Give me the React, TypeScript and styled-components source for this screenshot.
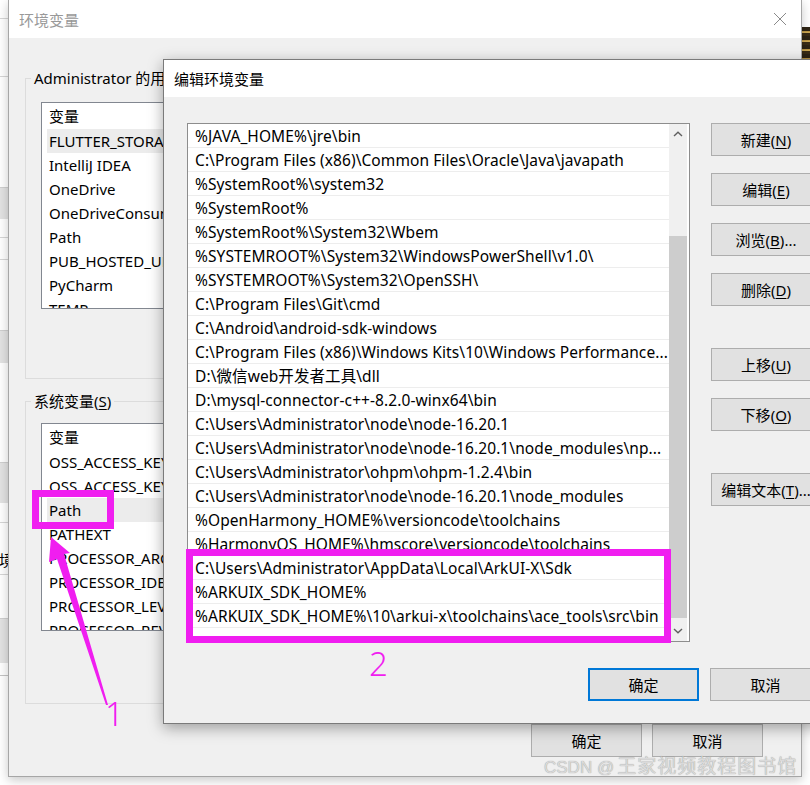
import React from "react";
import styled, { createGlobalStyle } from "styled-components";

const UI_FONT = `"Noto Sans", "Noto Sans CJK SC", sans-serif`;
const MAGENTA = "#f01ef0";

const GlobalStyle = createGlobalStyle`
  html, body { margin: 0; padding: 0; }
  body {
    width: 810px;
    height: 785px;
    overflow: hidden;
    background: #ffffff;
    font-family: ${UI_FONT};
  }
`;

const Desktop = styled.div`
  position: relative;
  width: 810px;
  height: 785px;
  overflow: hidden;
  background: #ffffff;
  font-family: ${UI_FONT};
  font-size: 15px;
  color: #000;
`;

/* ---------- background windows on the desktop ---------- */

const BackWindow = styled.div`
  position: absolute;
  left: 0;
  top: 0;
  width: 8px;
  height: 675px;
  overflow: hidden;
  display: flex;
  flex-direction: column;
  background: #ffffff;
  border-bottom: 1px solid #c4c4c4;
`;

const Band = styled.div<{ $h: number; $kind: "white" | "gray" | "line"; $padTop?: number }>`
  flex: none;
  height: ${(p) => p.$h}px;
  display: flex;
  align-items: flex-start;
  justify-content: flex-end;
  padding-top: ${(p) => p.$padTop ?? 0}px;
  background: ${(p) =>
    p.$kind === "gray" ? "#e3e3e3" : p.$kind === "line" ? "#d6d6d6" : "#ffffff"};
  border-top: ${(p) => (p.$kind === "gray" ? "1px solid #cfcfcf" : "none")};
  box-sizing: border-box;
  font-size: 15px;
  line-height: 20px;
  white-space: nowrap;
`;

const ClippedChar = styled.span`
  margin-right: -6px;
`;

const RightStrip = styled.div`
  position: absolute;
  left: 801px;
  top: 0;
  width: 9px;
  height: 785px;
  display: flex;
  flex-direction: column;
  background: #ffffff;
`;

const StripBlock = styled.div<{ $h: number; $bg: string }>`
  flex: none;
  height: ${(p) => p.$h}px;
  background: ${(p) => p.$bg};
`;

/* ---------- generic window parts ---------- */

const TitleBar = styled.div<{ $h: number; $pl: number; $pr: number }>`
  flex: none;
  height: ${(p) => p.$h}px;
  display: flex;
  align-items: center;
  justify-content: space-between;
  padding: 0 ${(p) => p.$pr}px 0 ${(p) => p.$pl}px;
  background: #ffffff;
`;

const TitleText = styled.span<{ $inactive?: boolean }>`
  font-size: 15px;
  color: ${(p) => (p.$inactive ? "#999999" : "#000000")};
`;

const WinButton = styled.button<{ $w: number; $default?: boolean }>`
  flex: none;
  width: ${(p) => p.$w}px;
  height: 33px;
  box-sizing: border-box;
  margin: 0;
  padding: 0 0 1px 0;
  background: #e1e1e1;
  border: ${(p) => (p.$default ? "2px solid #0078d7" : "1px solid #adadad")};
  font-family: ${UI_FONT};
  font-size: 15px;
  color: #000;
  white-space: nowrap;
  u {
    text-decoration-thickness: 1px;
    text-underline-offset: 2px;
  }
`;

/* ---------- main "环境变量" window ---------- */

const MainWindow = styled.section`
  position: absolute;
  left: 8px;
  top: 0;
  width: 794px;
  height: 777px;
  box-sizing: border-box;
  border: 1px solid #a6a6a6;
  border-top: none;
  background: #f0f0f0;
  display: flex;
  flex-direction: column;
  box-shadow: 0 3px 10px rgba(0, 0, 0, 0.22);
`;

const MainBody = styled.div`
  flex: 1;
  display: flex;
  flex-direction: column;
  padding: 30px 16px 0 16px;
`;

const GroupBox = styled.fieldset<{ $pt: number; $pb: number; $mt?: number }>`
  margin: ${(p) => p.$mt ?? 0}px 0 0 0;
  padding: ${(p) => p.$pt}px 15px ${(p) => p.$pb}px 15px;
  border: 1px solid #dcdcdc;
  min-width: 0;
`;

const Legend = styled.legend`
  margin-left: -10px;
  padding: 0 3px;
  font-size: 15px;
  line-height: 20px;
  color: #000;
  white-space: nowrap;
  u {
    text-underline-offset: 2px;
  }
`;

const VarList = styled.div<{ $h: number }>`
  height: ${(p) => p.$h}px;
  box-sizing: border-box;
  background: #ffffff;
  border: 1px solid #828790;
  overflow: hidden;
  display: flex;
  flex-direction: column;
`;

const VarHeader = styled.div`
  flex: none;
  height: 26px;
  line-height: 26px;
  padding-left: 7px;
  font-size: 15px;
`;

const VarRow = styled.div<{ $selected?: boolean }>`
  flex: none;
  height: 24px;
  line-height: 24px;
  margin-left: 5px;
  padding-left: 2px;
  font-size: 15px;
  white-space: nowrap;
  background: ${(p) => (p.$selected ? "#ececec" : "transparent")};
`;

const MainFooter = styled.div`
  display: flex;
  justify-content: flex-end;
  gap: 10px;
  margin-top: 20px;
  padding-right: 22px;
`;

/* ---------- "编辑环境变量" window ---------- */

const EditWindow = styled.section`
  position: absolute;
  left: 163px;
  top: 59px;
  width: 682px;
  height: 665px;
  box-sizing: border-box;
  border: 1px solid #7a7a7a;
  background: #f0f0f0;
  display: flex;
  flex-direction: column;
  box-shadow: 0 4px 14px rgba(0, 0, 0, 0.35);
`;

const EditBody = styled.div`
  display: grid;
  grid-template-columns: 503px 110px;
  column-gap: 21px;
  row-gap: 26px;
  align-items: start;
  padding: 26px 0 0 23px;
`;

const PathList = styled.div`
  width: 503px;
  height: 519px;
  box-sizing: border-box;
  background: #ffffff;
  border: 1px solid #8d8d8d;
  display: flex;
  overflow: hidden;
`;

const PathRows = styled.div`
  flex: 1;
  min-width: 0;
  display: flex;
  flex-direction: column;
`;

const PathRow = styled.div`
  flex: none;
  height: 24px;
  box-sizing: border-box;
  border-bottom: 1px solid #ededed;
  padding-left: 7px;
  line-height: 24px;
  font-size: 15.5px;
  letter-spacing: 0.08px;
  white-space: nowrap;
  overflow: hidden;
  text-overflow: clip;
`;

const ScrollBar = styled.div`
  flex: none;
  width: 18px;
  margin-right: 2px;
  display: flex;
  flex-direction: column;
  background: #f0f0f0;
`;

const ScrollArrow = styled.div`
  flex: none;
  height: 20px;
  display: flex;
  align-items: center;
  justify-content: center;
`;

const ScrollTrack = styled.div`
  flex: 1;
  display: flex;
  flex-direction: column;
`;

const ScrollThumb = styled.div<{ $top: number; $h: number }>`
  flex: none;
  margin-top: ${(p) => p.$top}px;
  height: ${(p) => p.$h}px;
  background: #cdcdcd;
`;

const ButtonColumn = styled.div`
  display: flex;
  flex-direction: column;
  gap: 42px;
`;

const ButtonGroup = styled.div`
  display: flex;
  flex-direction: column;
  gap: 17px;
`;

const EditFooter = styled.div`
  grid-column: 1 / span 2;
  justify-self: end;
  display: flex;
  gap: 11px;
`;

/* ---------- annotations ---------- */

const HighlightBox = styled.div<{ $x: number; $y: number; $w: number; $h: number }>`
  position: absolute;
  left: ${(p) => p.$x}px;
  top: ${(p) => p.$y}px;
  width: ${(p) => p.$w}px;
  height: ${(p) => p.$h}px;
  box-sizing: border-box;
  border: 7px solid ${MAGENTA};
  pointer-events: none;
`;

const Callout = styled.span<{ $x: number; $y: number }>`
  position: absolute;
  left: ${(p) => p.$x}px;
  top: ${(p) => p.$y}px;
  font-family: "Noto Sans", sans-serif;
  font-weight: 300;
  font-size: 33px;
  line-height: 33px;
  color: ${MAGENTA};
`;

const ArrowLayer = styled.svg`
  position: absolute;
  left: 0;
  top: 0;
  width: 810px;
  height: 785px;
  pointer-events: none;
`;

const Watermark = styled.div`
  position: absolute;
  left: 544px;
  top: 751px;
  display: flex;
  align-items: baseline;
  white-space: nowrap;
  color: #dadada;
  text-shadow: 0 0 1px rgba(0, 0, 0, 0.4);
`;

const WatermarkLatin = styled.span`
  font-family: "Liberation Sans", sans-serif;
  font-size: 17px;
  margin-right: 3px;
`;

const WatermarkCJK = styled.span`
  font-family: "Noto Sans CJK SC", sans-serif;
  font-size: 19px;
  letter-spacing: 1px;
`;

/* ---------- icons ---------- */

const CloseIcon = () => (
  <svg width="14" height="14" viewBox="0 0 14 14">
    <path d="M1 1 L13 13 M13 1 L1 13" stroke="#8a8a8a" strokeWidth="1" fill="none" />
  </svg>
);

const Chevron = ({ up }: { up: boolean }) => (
  <svg width="10" height="6" viewBox="0 0 10 6">
    <polyline
      points={up ? "1,5 5,1.2 9,5" : "1,1 5,4.8 9,1"}
      stroke="#606060"
      strokeWidth="1.4"
      fill="none"
    />
  </svg>
);

/* ---------- data ---------- */

const backBands: {
  h: number;
  kind: "white" | "gray" | "line";
  text?: string;
  padTop?: number;
}[] = [
  { h: 18, kind: "white" },
  { h: 1, kind: "line" },
  { h: 57, kind: "white" },
  { h: 1, kind: "line" },
  { h: 110, kind: "white" },
  { h: 32, kind: "gray" },
  { h: 18, kind: "white" },
  { h: 1, kind: "line" },
  { h: 21, kind: "white" },
  { h: 1, kind: "line" },
  { h: 70, kind: "white" },
  { h: 33, kind: "gray" },
  { h: 99, kind: "white" },
  { h: 41, kind: "gray" },
  { h: 19, kind: "white" },
  { h: 1, kind: "line" },
  { h: 51, kind: "white", text: "境", padTop: 27 },
  { h: 1, kind: "line" },
  { h: 43, kind: "white" },
  { h: 45, kind: "gray" },
  { h: 12, kind: "white" },
];

const userVars = [
  "FLUTTER_STORAGE_BASE_URL",
  "IntelliJ IDEA",
  "OneDrive",
  "OneDriveConsumer",
  "Path",
  "PUB_HOSTED_URL",
  "PyCharm",
  "TEMP",
];

const systemVars = [
  "OSS_ACCESS_KEY_ID",
  "OSS_ACCESS_KEY_SECRET",
  "Path",
  "PATHEXT",
  "PROCESSOR_ARCHITECTURE",
  "PROCESSOR_IDENTIFIER",
  "PROCESSOR_LEVEL",
  "PROCESSOR_REVISION",
];

const paths = [
  "%JAVA_HOME%\\jre\\bin",
  "C:\\Program Files (x86)\\Common Files\\Oracle\\Java\\javapath",
  "%SystemRoot%\\system32",
  "%SystemRoot%",
  "%SystemRoot%\\System32\\Wbem",
  "%SYSTEMROOT%\\System32\\WindowsPowerShell\\v1.0\\",
  "%SYSTEMROOT%\\System32\\OpenSSH\\",
  "C:\\Program Files\\Git\\cmd",
  "C:\\Android\\android-sdk-windows",
  "C:\\Program Files (x86)\\Windows Kits\\10\\Windows Performance...",
  "D:\\微信web开发者工具\\dll",
  "D:\\mysql-connector-c++-8.2.0-winx64\\bin",
  "C:\\Users\\Administrator\\node\\node-16.20.1",
  "C:\\Users\\Administrator\\node\\node-16.20.1\\node_modules\\np...",
  "C:\\Users\\Administrator\\ohpm\\ohpm-1.2.4\\bin",
  "C:\\Users\\Administrator\\node\\node-16.20.1\\node_modules",
  "%OpenHarmony_HOME%\\versioncode\\toolchains",
  "%HarmonyOS_HOME%\\hmscore\\versioncode\\toolchains",
  "C:\\Users\\Administrator\\AppData\\Local\\ArkUI-X\\Sdk",
  "%ARKUIX_SDK_HOME%",
  "%ARKUIX_SDK_HOME%\\10\\arkui-x\\toolchains\\ace_tools\\src\\bin",
];

const Mn = ({ label, key1, suffix = "" }: { label: string; key1: string; suffix?: string }) => (
  <>
    {label}(<u>{key1}</u>){suffix}
  </>
);

export default function App() {
  return (
    <>
      <GlobalStyle />
      <Desktop>
        <BackWindow>
          {backBands.map((b, i) => (
            <Band key={i} $h={b.h} $kind={b.kind} $padTop={b.padTop}>
              {b.text ? <ClippedChar>{b.text}</ClippedChar> : null}
            </Band>
          ))}
        </BackWindow>

        <RightStrip>
          <StripBlock $h={27} $bg="#ffffff" />
          <StripBlock
            $h={33}
            $bg="repeating-linear-gradient(180deg, #2e2414 0px, #2e2414 4px, #b8903e 4px, #d9b45a 6px, #3a2c16 6px, #3a2c16 9px)"
          />
          <StripBlock $h={37} $bg="#ffffff" />
          <StripBlock $h={27} $bg="#efefef" />
          <StripBlock $h={2} $bg="#cfcfcf" />
          <StripBlock $h={659} $bg="#ffffff" />
        </RightStrip>

        <MainWindow>
          <TitleBar $h={38} $pl={10} $pr={14}>
            <TitleText $inactive>环境变量</TitleText>
            <CloseIcon />
          </TitleBar>
          <MainBody>
            <GroupBox $pt={14} $pb={69}>
              <Legend>
                Administrator 的用户变量(<u>U</u>)
              </Legend>
              <VarList $h={207}>
                <VarHeader>变量</VarHeader>
                {userVars.map((v, i) => (
                  <VarRow key={v + i} $selected={i === 0}>
                    {v}
                  </VarRow>
                ))}
              </VarList>
            </GroupBox>
            <GroupBox $pt={12} $pb={72} $mt={12}>
              <Legend>
                系统变量(<u>S</u>)
              </Legend>
              <VarList $h={208}>
                <VarHeader>变量</VarHeader>
                {systemVars.map((v, i) => (
                  <VarRow key={v + i} $selected={i === 2}>
                    {v}
                  </VarRow>
                ))}
              </VarList>
            </GroupBox>
            <MainFooter>
              <WinButton $w={111}>确定</WinButton>
              <WinButton $w={111}>取消</WinButton>
            </MainFooter>
          </MainBody>
        </MainWindow>

        <EditWindow>
          <TitleBar $h={37} $pl={10} $pr={10}>
            <TitleText>编辑环境变量</TitleText>
          </TitleBar>
          <EditBody>
            <PathList>
              <PathRows>
                {paths.map((p, i) => (
                  <PathRow key={i}>{p}</PathRow>
                ))}
              </PathRows>
              <ScrollBar>
                <ScrollArrow>
                  <Chevron up />
                </ScrollArrow>
                <ScrollTrack>
                  <ScrollThumb $top={92} $h={382} />
                </ScrollTrack>
                <ScrollArrow>
                  <Chevron up={false} />
                </ScrollArrow>
              </ScrollBar>
            </PathList>
            <ButtonColumn>
              <ButtonGroup>
                <WinButton $w={110}>
                  <Mn label="新建" key1="N" />
                </WinButton>
                <WinButton $w={110}>
                  <Mn label="编辑" key1="E" />
                </WinButton>
                <WinButton $w={110}>
                  <Mn label="浏览" key1="B" suffix="..." />
                </WinButton>
                <WinButton $w={110}>
                  <Mn label="删除" key1="D" />
                </WinButton>
              </ButtonGroup>
              <ButtonGroup>
                <WinButton $w={110}>
                  <Mn label="上移" key1="U" />
                </WinButton>
                <WinButton $w={110}>
                  <Mn label="下移" key1="O" />
                </WinButton>
              </ButtonGroup>
              <ButtonGroup>
                <WinButton $w={110}>
                  <Mn label="编辑文本" key1="T" suffix="..." />
                </WinButton>
              </ButtonGroup>
            </ButtonColumn>
            <EditFooter>
              <WinButton $w={111} $default>
                确定
              </WinButton>
              <WinButton $w={111}>取消</WinButton>
            </EditFooter>
          </EditBody>
        </EditWindow>

        <HighlightBox $x={32} $y={490} $w={82} $h={39} />
        <HighlightBox $x={186} $y={549} $w={485} $h={94} />
        <ArrowLayer viewBox="0 0 810 785">
          <polygon
            points="51,537 70,553 64,554 108,705 106,705 57,559 49,562"
            fill={MAGENTA}
          />
        </ArrowLayer>
        <Callout $x={105} $y={697}>1</Callout>
        <Callout $x={369} $y={647}>2</Callout>

        <Watermark>
          <WatermarkLatin>CSDN @</WatermarkLatin>
          <WatermarkCJK>王家视频教程图书馆</WatermarkCJK>
        </Watermark>
      </Desktop>
    </>
  );
}
